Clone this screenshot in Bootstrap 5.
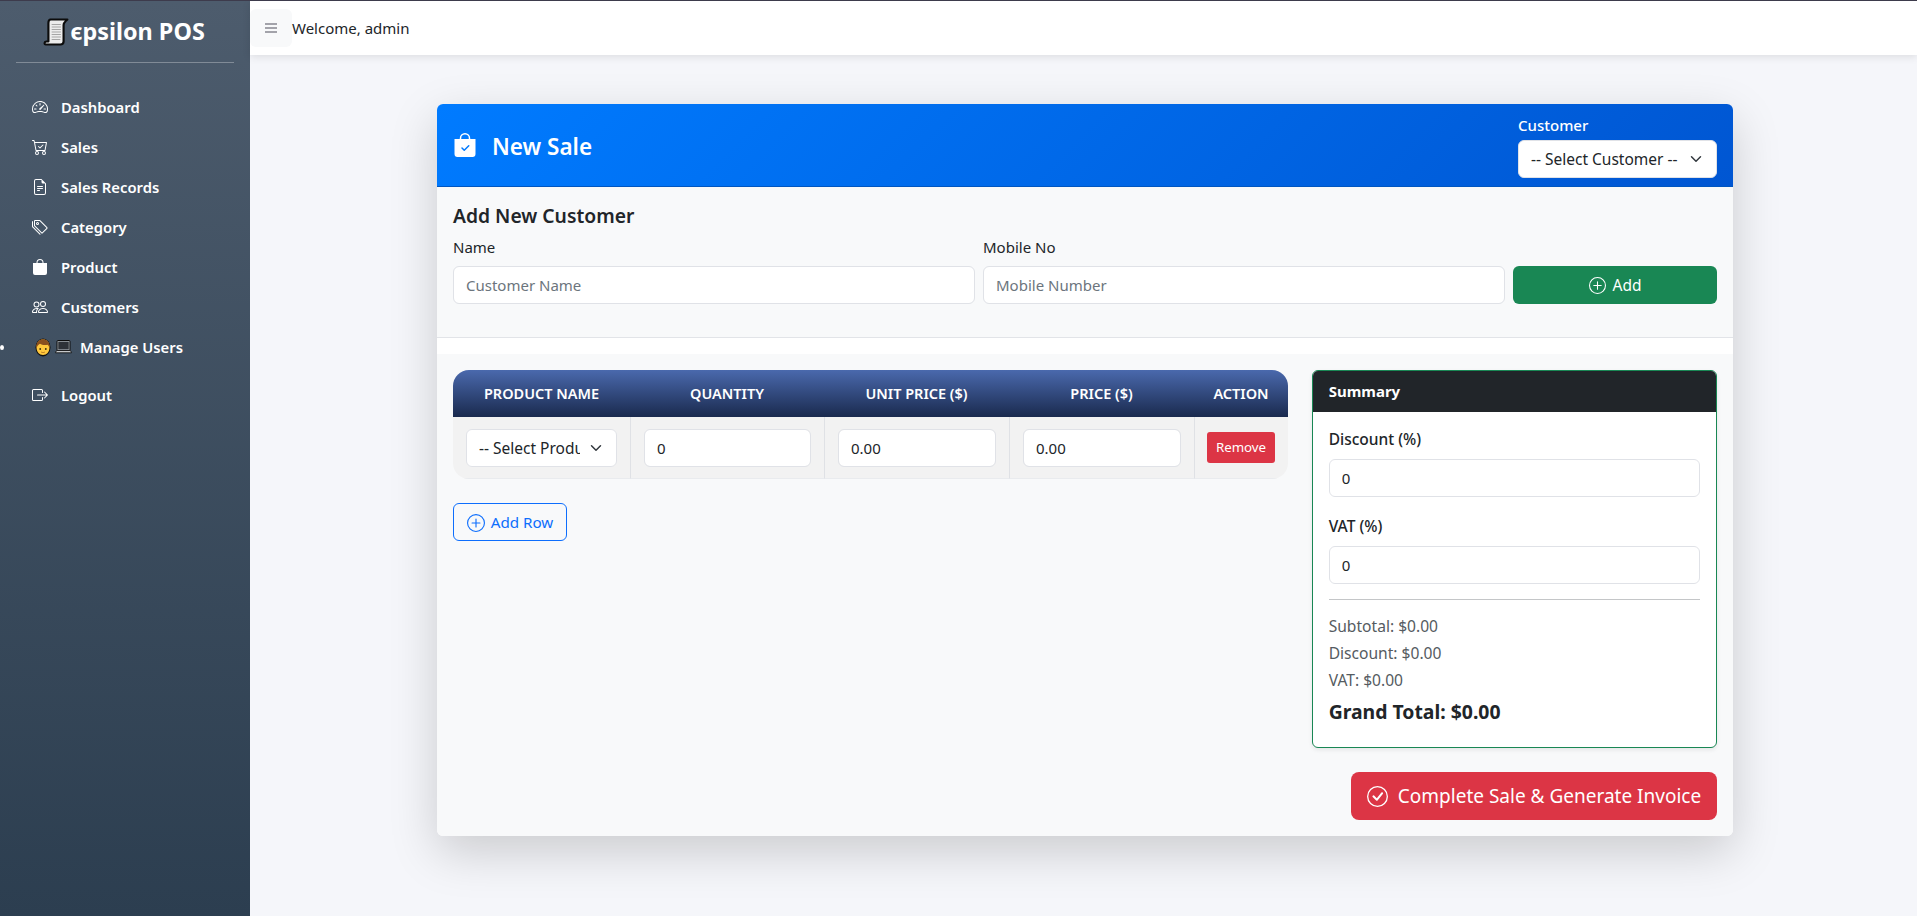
<!DOCTYPE html>
<html lang="en">
<head>
<meta charset="utf-8">
<title>epsilon POS</title>
<link href="https://cdn.jsdelivr.net/npm/bootstrap@5.3.0/dist/css/bootstrap.min.css" rel="stylesheet">
<style>
:root{--ui-font:"Noto Sans","Open Sans",sans-serif;}
html,body{height:100%;}
body{font-family:var(--ui-font);background:#f5f6fa;font-size:15px;color:#212529;border-top:1px solid #3d3b4c;overflow:hidden;}
.app-shell{height:915px;}
.side-rail{width:250px;flex:0 0 250px;background:linear-gradient(180deg,#4d5c6d 0%,#2c3e50 100%);color:#fff;padding:0 16px;}
.brand-line{height:62px;border-bottom:1px solid rgba(255,255,255,.3);font-size:23.4px;font-weight:700;color:#fff;padding-top:1px;}
.brand-line svg{width:26px;height:28px;margin-right:1px;margin-left:-2px;}
.rail-list{list-style:none;padding:0;margin:24px 0 0;}
.rail-list>li{height:40px;position:relative;}
.rail-list>li.bullet-item::before{content:"";position:absolute;left:-16px;top:18px;width:4px;height:5px;border-radius:50%;background:#fff;}
.rail-list>li.gap-before{margin-top:8px;}
.rail-link{display:flex;align-items:center;height:40px;padding:0 16px;color:#fff;font-weight:600;font-size:14.8px;text-decoration:none;}
.rail-link svg.glyph{width:16px;height:16px;margin-right:13px;flex:none;}
.emoji-pair{display:inline-flex;align-items:center;gap:4px;margin:0 8px 0 3px;}
.top-strip{height:54px;background:#fff;box-shadow:0 2px 8px rgba(0,0,0,.1);font-size:15px;}
.menu-toggle{width:42px;height:38px;background:#f8f9fa;border:0;border-radius:6px;padding:0;}
.menu-toggle span{display:block;width:12px;height:2px;background:#a3a3aa;margin:2px auto;}
.sale-sheet{width:1296px;margin:49px 0 0 187px;background:#fff;border-radius:6px;box-shadow:0 1rem 3rem rgba(0,0,0,.175);overflow:hidden;}
.sale-head{height:83px;padding:0 16px;background:linear-gradient(135deg,#007bff 0%,#0056d2 100%);color:#fff;border-bottom:1px solid #0056c0;}
.sale-title{font-size:22.5px;font-weight:600;margin:0;}
.sale-title span{padding-top:2px;}
.sale-head svg{width:24px;height:24px;margin-right:15px;}
.cust-pick{width:199px;margin-top:3px;}
.cust-pick label{font-size:15px;font-weight:500;line-height:18px;margin-bottom:6px;display:block;}
.form-control,.form-select{height:38px;font-size:15px;border-color:#e0e2e7;color:#212529;border-radius:6px;}
.form-select{font-size:15.5px;padding-top:7px;padding-bottom:5px;}
.form-control::placeholder{color:#6c757d;}
.cust-block{background:#f8f9fa;padding:15px 16px 0;height:150px;}
.cust-block h5{font-size:19.3px;font-weight:600;margin:0 0 6px;line-height:28px;}
.cust-block label{font-size:15px;margin-bottom:8px;line-height:22px;display:block;}
.btn-add{height:38px;background:#198754;color:#fff;border:0;border-radius:6px;font-size:15.5px;padding:2px 0 0;}
.btn-add svg{width:17px;height:17px;margin-right:7px;vertical-align:-3px;}
.divider-line{height:1px;background:#e2e4e8;}
.work-area{background:#f8f9fa;margin-top:16px;padding:16px;height:482px;}
.sale-grid{border-collapse:separate;border-spacing:0;width:835px;table-layout:fixed;border-radius:16px;overflow:hidden;}
.sale-grid th{height:47px;padding:0;background:linear-gradient(180deg,#4a69ad 0%,#1a2a4e 100%);color:#fff;text-transform:uppercase;font-size:14.5px;font-weight:600;text-align:center;vertical-align:middle;}
.sale-grid td{background:#f2f2f2;height:62px;padding:12px 13px 11px;border-left:1px solid #dfe1e5;border-bottom:1px solid #e9ebee;vertical-align:middle;}
.sale-grid td:first-child{border-left:0;}
.sale-grid td.act-cell{padding:0 11px 0 12px;}
.btn-remove{background:#dc3545;color:#fff;border:0;border-radius:3px;height:31px;width:68px;font-size:13.3px;padding:0;}
.add-row{height:38px;width:114px;margin-top:24px;background:transparent;color:#0d6efd;border:1px solid #0d6efd;border-radius:6px;font-size:15.2px;padding:0;}
.add-row svg{width:18px;height:18px;margin-right:6px;vertical-align:-4px;}
.total-card{height:378px;border:1px solid #198754;border-radius:6px;background:#fff;box-shadow:0 2px 4px rgba(0,0,0,.08);overflow:hidden;}
.total-card header{height:41px;background:#212529;color:#fff;font-weight:700;font-size:15px;line-height:41px;padding:0 16px;}
.total-card .inner{padding:15px 16px 16px;}
.total-card label{font-weight:500;font-size:15.5px;display:block;line-height:24px;margin-bottom:8px;}
.total-card .mb-gap{margin-bottom:17px;}
.total-card hr{margin:15px 0 13px;border-color:#8a8d92;opacity:.5;}
.sum-line{color:#555b61;font-size:15.6px;line-height:27px;}
.sum-grand{font-size:19.4px;font-weight:700;line-height:27px;margin-top:4px;}
.btn-finish{height:48px;width:366px;margin-top:24px;background:#dc3545;color:#fff;border:0;border-radius:8px;font-size:19px;padding:0;}
.btn-finish svg{width:21px;height:21px;margin-right:10px;vertical-align:-4px;}
</style>
</head>
<body>
<div class="app-shell d-flex">
  <aside class="side-rail">
    <div class="brand-line d-flex align-items-center justify-content-center">
      <svg viewBox="0 0 24 28" preserveAspectRatio="none"><path d="M7 1.500h15.500l-1.600 1.600c-1.200 1.200-1.900 2.400-1.900 4V23.500c0 1.800-1.200 3-3 3H2.600c-1.600 0-1.600-2.600.4-3h2V5c0-2 .6-3.500 2-3.500z" fill="#ececec" stroke="#0c0c0c" stroke-width="2" stroke-linejoin="round"/><path d="M8 6.500h8.500M8 9h8.500M8 11.500h8.500M8 14h8.500M8 16.500h8.500M8 19h8.500M8 21.500h8" stroke="#a5a5a5" stroke-width="1.100"/></svg>
      <span>ϵpsilon POS</span>
    </div>
    <ul class="rail-list">
      <li><a class="rail-link" href="#"><svg class="glyph" viewBox="0 0 16 16" fill="currentColor"><path d="M8 4a.5.5 0 0 1 .5.5V6a.5.5 0 0 1-1 0V4.5A.5.5 0 0 1 8 4zM3.732 5.732a.5.5 0 0 1 .707 0l.915.914a.5.5 0 1 1-.708.708l-.914-.915a.5.5 0 0 1 0-.707zM2 10a.5.5 0 0 1 .5-.5h1.586a.5.5 0 0 1 0 1H2.5A.5.5 0 0 1 2 10zm9.5 0a.5.5 0 0 1 .5-.5h1.5a.5.5 0 0 1 0 1H12a.5.5 0 0 1-.5-.5zm.754-4.246a.389.389 0 0 0-.527-.02L7.547 9.31a.91.91 0 1 0 1.302 1.258l3.434-4.297a.389.389 0 0 0-.029-.518z"/><path fill-rule="evenodd" d="M0 10a8 8 0 1 1 15.547 2.661c-.442 1.253-1.845 1.602-2.932 1.25C11.309 13.488 9.475 13 8 13c-1.474 0-3.31.488-4.615.911-1.087.352-2.49.003-2.932-1.25A7.988 7.988 0 0 1 0 10zm8-7a7 7 0 0 0-6.603 9.329c.203.575.923.876 1.68.63C4.397 12.533 6.358 12 8 12s3.604.532 4.923.96c.757.245 1.477-.056 1.68-.631A7 7 0 0 0 8 3z"/></svg>Dashboard</a></li>
      <li><a class="rail-link" href="#"><svg class="glyph" viewBox="0 0 16 16" fill="currentColor"><path d="M11.354 6.354a.5.5 0 0 0-.708-.708L8 8.293 6.854 7.146a.5.5 0 1 0-.708.708l1.5 1.5a.5.5 0 0 0 .708 0l3-3z"/><path d="M.5 1a.5.5 0 0 0 0 1h1.11l.401 1.607 1.498 7.985A.5.5 0 0 0 4 12h1a2 2 0 1 0 0 4 2 2 0 0 0 0-4h7a2 2 0 1 0 0 4 2 2 0 0 0 0-4h1a.5.5 0 0 0 .491-.408l1.5-8A.5.5 0 0 0 14.5 3H2.89l-.405-1.621A.5.5 0 0 0 2 1H.5zm3.915 10L3.102 4h10.796l-1.313 7h-8.17zM6 14a1 1 0 1 1-2 0 1 1 0 0 1 2 0zm7 0a1 1 0 1 1-2 0 1 1 0 0 1 2 0z"/></svg>Sales</a></li>
      <li><a class="rail-link" href="#"><svg class="glyph" viewBox="0 0 16 16" fill="currentColor"><path d="M5.5 7a.5.5 0 0 0 0 1h5a.5.5 0 0 0 0-1h-5zM5 9.5a.5.5 0 0 1 .5-.5h5a.5.5 0 0 1 0 1h-5a.5.5 0 0 1-.5-.5zm0 2a.5.5 0 0 1 .5-.5h2a.5.5 0 0 1 0 1h-2a.5.5 0 0 1-.5-.5z"/><path d="M9.5 0H4a2 2 0 0 0-2 2v12a2 2 0 0 0 2 2h8a2 2 0 0 0 2-2V4.5L9.5 0zm0 1v2A1.5 1.5 0 0 0 11 4.5h2V14a1 1 0 0 1-1 1H4a1 1 0 0 1-1-1V2a1 1 0 0 1 1-1h5.5z"/></svg>Sales Records</a></li>
      <li><a class="rail-link" href="#"><svg class="glyph" viewBox="0 0 16 16" fill="currentColor"><path d="M3 2v4.586l7 7L14.586 9l-7-7H3zM2 2a1 1 0 0 1 1-1h4.586a1 1 0 0 1 .707.293l7 7a1 1 0 0 1 0 1.414l-4.586 4.586a1 1 0 0 1-1.414 0l-7-7A1 1 0 0 1 2 6.586V2z"/><path d="M5.5 5a.5.5 0 1 1 0-1 .5.5 0 0 1 0 1zm0 1a1.5 1.5 0 1 0 0-3 1.5 1.5 0 0 0 0 3zM1 7.086a1 1 0 0 0 .293.707L8.75 15.25l-.043.043a1 1 0 0 1-1.414 0l-7-7A1 1 0 0 1 0 7.586V3a1 1 0 0 1 1-1v5.086z"/></svg>Category</a></li>
      <li><a class="rail-link" href="#"><svg class="glyph" viewBox="0 0 16 16" fill="currentColor"><path d="M8 1a2.5 2.5 0 0 1 2.5 2.5V4h-5v-.5A2.5 2.5 0 0 1 8 1zm3.5 3v-.5a3.5 3.5 0 1 0-7 0V4H1v10a2 2 0 0 0 2 2h10a2 2 0 0 0 2-2V4h-3.5z"/></svg>Product</a></li>
      <li><a class="rail-link" href="#"><svg class="glyph" viewBox="0 0 16 16" fill="currentColor"><path d="M15 14s1 0 1-1-1-4-5-4-5 3-5 4 1 1 1 1h8Zm-7.978-1A.261.261 0 0 1 7 12.996c.001-.264.167-1.03.76-1.72C8.312 10.629 9.282 10 11 10c1.717 0 2.687.63 3.24 1.276.593.69.758 1.457.76 1.72l-.008.002a.274.274 0 0 1-.014.002H7.022ZM11 7a2 2 0 1 0 0-4 2 2 0 0 0 0 4Zm3-2a3 3 0 1 1-6 0 3 3 0 0 1 6 0ZM6.936 9.28a5.88 5.88 0 0 0-1.23-.247A7.35 7.35 0 0 0 5 9c-4 0-5 3-5 4 0 .667.333 1 1 1h4.216A2.238 2.238 0 0 1 5 13c0-1.01.377-2.042 1.09-2.904.243-.294.526-.569.846-.816ZM4.92 10A5.493 5.493 0 0 0 4 13H1c0-.26.164-1.03.76-1.724.545-.636 1.492-1.256 3.16-1.275ZM1.5 5.5a3 3 0 1 1 6 0 3 3 0 0 1-6 0Zm3-2a2 2 0 1 0 0 4 2 2 0 0 0 0-4Z"/></svg>Customers</a></li>
      <li class="bullet-item"><a class="rail-link" href="#"><span class="emoji-pair"><svg width="16" height="19" viewBox="0 0 16 19"><ellipse cx="8" cy="9.5" rx="7.5" ry="9" fill="#111"/><path d="M1.5 9.5C1.5 4 4.5 1.5 8 1.5s6.5 2.500 6.5 8c0 4.500-2.800 7.500-6.500 7.500s-6.500-3-6.500-7.500z" fill="#ffc83d"/><path d="M1.300 10.500C.8 4 4.500 1.200 8 1.200s7.200 2.800 6.700 9.300c-.6-2-1.400-3.200-2.200-3.800-2 .6-5.500.6-7.500-.9-1.600.8-3 2.600-3.700 4.700z" fill="#8a4f1f"/><circle cx="5.200" cy="11" r=".9" fill="#3a2a10"/><circle cx="10.800" cy="11" r=".9" fill="#3a2a10"/><path d="M6 14c1.200.8 2.800.8 4 0" stroke="#a8661c" stroke-width=".7" fill="none"/></svg><svg width="17" height="14" viewBox="0 0 17 14"><rect x="2" y=".5" width="13" height="10" rx="1" fill="#9da3a9" stroke="#0c0c0c"/><rect x="3.300" y="1.800" width="10.400" height="7.500" fill="#2e3238"/><path d="M1.500 10.500h14l1 2.300H.5z" fill="#c4c7ca" stroke="#0c0c0c" stroke-width=".8"/></svg></span>Manage Users</a></li>
      <li class="gap-before"><a class="rail-link" href="#"><svg class="glyph" viewBox="0 0 16 16" fill="currentColor"><path fill-rule="evenodd" d="M10 12.5a.5.5 0 0 1-.5.5h-8a.5.5 0 0 1-.5-.5v-9a.5.5 0 0 1 .5-.5h8a.5.5 0 0 1 .5.5v2a.5.5 0 0 0 1 0v-2A1.5 1.5 0 0 0 9.5 2h-8A1.5 1.5 0 0 0 0 3.5v9A1.5 1.5 0 0 0 1.5 14h8a1.5 1.5 0 0 0 1.5-1.500v-2a.5.5 0 0 0-1 0v2z"/><path fill-rule="evenodd" d="M15.854 8.354a.5.5 0 0 0 0-.708l-3-3a.5.5 0 0 0-.708.708L14.293 7.5H5.5a.5.5 0 0 0 0 1h8.793l-2.147 2.146a.5.5 0 0 0 .708.708l3-3z"/></svg>Logout</a></li>
    </ul>
  </aside>
  <main class="flex-grow-1">
    <div class="top-strip d-flex align-items-center">
      <button class="menu-toggle" type="button" aria-label="Toggle menu"><span></span><span></span><span></span></button>
      <span>Welcome, admin</span>
    </div>
    <section class="sale-sheet">
      <div class="sale-head d-flex align-items-center justify-content-between">
        <h4 class="sale-title d-flex align-items-center"><svg viewBox="0 0 16 16" fill="currentColor"><path fill-rule="evenodd" d="M10.5 3.5a2.5 2.5 0 0 0-5 0V4h5v-.5zm1 0V4H15v10a2 2 0 0 1-2 2H3a2 2 0 0 1-2-2V4h3.5v-.5a3.5 3.5 0 1 1 7 0zm-.646 5.354a.5.5 0 0 0-.708-.708L7.5 10.793 6.354 9.646a.5.5 0 1 0-.708.708l1.5 1.5a.5.5 0 0 0 .708 0l3-3z"/></svg><span>New Sale</span></h4>
        <div class="cust-pick">
          <label for="custSel">Customer</label>
          <select id="custSel" class="form-select"><option>-- Select Customer --</option></select>
        </div>
      </div>
      <div class="cust-block">
        <h5>Add New Customer</h5>
        <div class="row g-2 align-items-end">
          <div class="col-5"><label>Name</label><input class="form-control" placeholder="Customer Name"></div>
          <div class="col-5"><label>Mobile No</label><input class="form-control" placeholder="Mobile Number"></div>
          <div class="col-2"><button class="btn-add w-100" type="button"><svg viewBox="0 0 16 16" fill="currentColor"><path d="M8 15A7 7 0 1 1 8 1a7 7 0 0 1 0 14zm0 1A8 8 0 1 0 8 0a8 8 0 0 0 0 16z"/><path d="M8 4a.5.5 0 0 1 .5.5v3h3a.5.5 0 0 1 0 1h-3v3a.5.5 0 0 1-1 0v-3h-3a.5.5 0 0 1 0-1h3v-3A.5.5 0 0 1 8 4z"/></svg>Add</button></div>
        </div>
      </div>
      <div class="divider-line"></div>
      <div class="work-area">
        <div class="row gx-4">
          <div class="col-8">
            <table class="sale-grid">
              <colgroup><col style="width:177px"><col style="width:194px"><col style="width:185px"><col style="width:185px"><col style="width:94px"></colgroup>
              <thead><tr><th>Product Name</th><th>Quantity</th><th>Unit Price ($)</th><th>Price ($)</th><th>Action</th></tr></thead>
              <tbody><tr>
                <td><select class="form-select"><option>-- Select Product --</option></select></td>
                <td><input class="form-control" value="0"></td>
                <td><input class="form-control" value="0.00"></td>
                <td><input class="form-control" value="0.00"></td>
                <td class="act-cell"><button class="btn-remove" type="button">Remove</button></td>
              </tr></tbody>
            </table>
            <button class="add-row d-block" type="button"><svg viewBox="0 0 16 16" fill="currentColor"><path d="M8 15A7 7 0 1 1 8 1a7 7 0 0 1 0 14zm0 1A8 8 0 1 0 8 0a8 8 0 0 0 0 16z"/><path d="M8 4a.5.5 0 0 1 .5.5v3h3a.5.5 0 0 1 0 1h-3v3a.5.5 0 0 1-1 0v-3h-3a.5.5 0 0 1 0-1h3v-3A.5.5 0 0 1 8 4z"/></svg>Add Row</button>
          </div>
          <div class="col-4">
            <div class="total-card">
              <header>Summary</header>
              <div class="inner">
                <label>Discount (%)</label>
                <input class="form-control mb-gap" value="0">
                <label>VAT (%)</label>
                <input class="form-control" value="0">
                <hr>
                <div class="sum-line">Subtotal: $0.00</div>
                <div class="sum-line">Discount: $0.00</div>
                <div class="sum-line">VAT: $0.00</div>
                <div class="sum-grand">Grand Total: $0.00</div>
              </div>
            </div>
          </div>
        </div>
        <div class="d-flex justify-content-end">
          <button class="btn-finish" type="button"><svg viewBox="0 0 16 16" fill="currentColor"><path d="M8 15A7 7 0 1 1 8 1a7 7 0 0 1 0 14zm0 1A8 8 0 1 0 8 0a8 8 0 0 0 0 16z"/><path d="M10.97 4.97a.235.235 0 0 0-.02.022L7.477 9.417 5.384 7.323a.75.75 0 0 0-1.06 1.06L6.97 11.03a.75.75 0 0 0 1.079-.02l3.992-4.99a.75.75 0 0 0-1.071-1.05z"/></svg>Complete Sale &amp; Generate Invoice</button>
        </div>
      </div>
    </section>
  </main>
</div>
<script src="https://cdn.jsdelivr.net/npm/bootstrap@5.3.0/dist/js/bootstrap.bundle.min.js"></script>
</body>
</html>
